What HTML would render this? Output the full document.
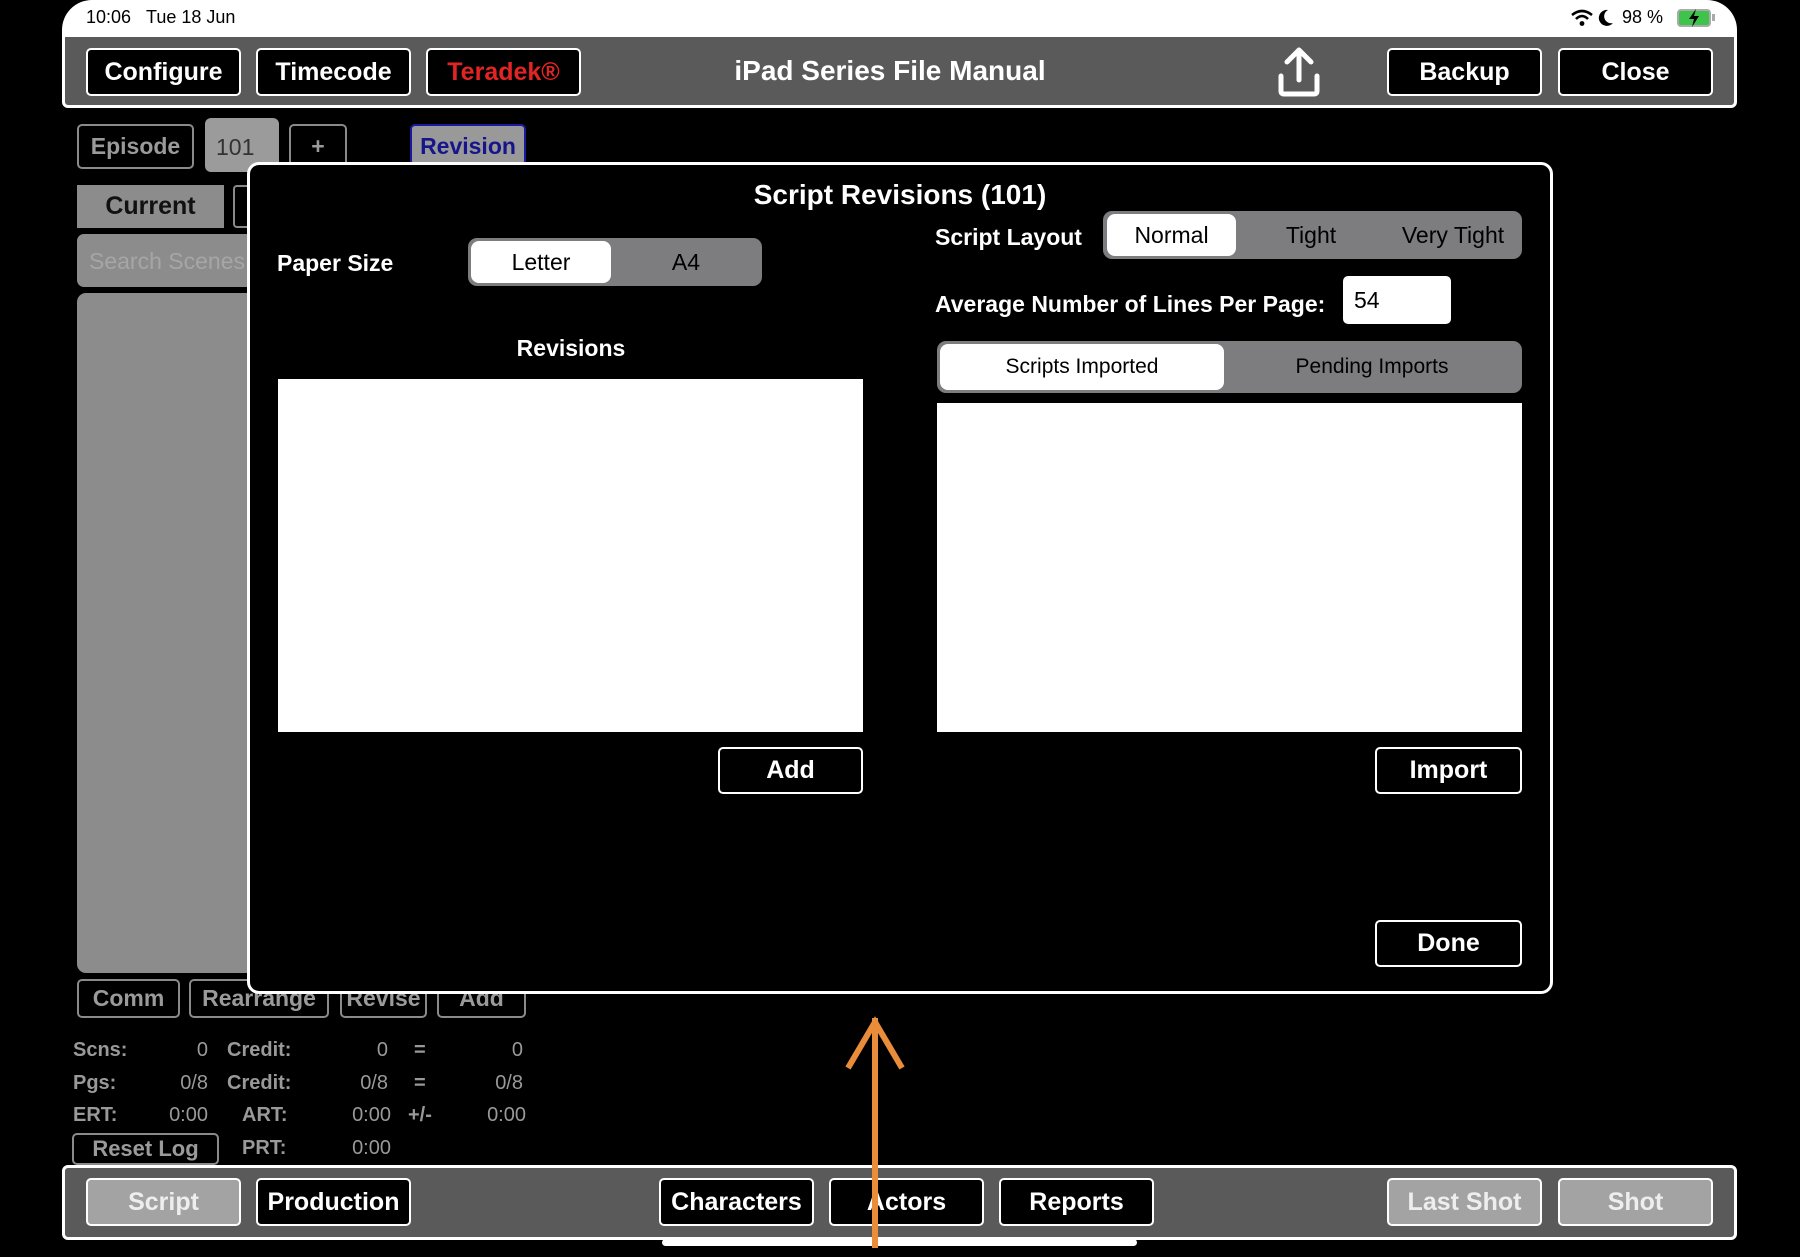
<!DOCTYPE html>
<html><head><meta charset="utf-8"><style>
*{margin:0;padding:0;box-sizing:border-box}
body{width:1800px;height:1257px;background:#000;position:relative;overflow:hidden;font-family:"Liberation Sans",Arial,sans-serif}
.a{position:absolute}
.btn{position:absolute;background:#000;border:2.5px solid #fff;border-radius:5px;color:#fff;font-weight:bold;font-size:25px;display:flex;align-items:center;justify-content:center}
.gb{position:absolute;border:2.5px solid #8a8a8a;border-radius:5px;color:#9a9a9a;font-weight:bold;font-size:23px;display:flex;align-items:center;justify-content:center;background:#000}
.gray{background:#a3a3a3;color:#eee}
.st{position:absolute;color:#999;font-size:20px}
.stb{position:absolute;color:#999;font-size:20px;font-weight:bold}
.c{display:flex;align-items:center;justify-content:center}
</style></head><body>
<div class="a" style="left:62px;top:0;width:1675px;height:36px;background:#fff;border-radius:30px 30px 0 0"></div>
<div class="a" style="left:86px;top:7px;font-size:18px;color:#000">10:06&nbsp;&nbsp;&nbsp;Tue 18 Jun</div>
<svg class="a" style="left:1570px;top:9px" width="24" height="18" viewBox="0 0 24 18"><path d="M2 6 Q12 -2 22 6" stroke="#000" stroke-width="2.6" fill="none"/><path d="M6 10 Q12 4 18 10" stroke="#000" stroke-width="2.6" fill="none"/><circle cx="12" cy="14.5" r="2.4" fill="#000"/></svg>
<svg class="a" style="left:1598px;top:9px" width="16" height="18" viewBox="0 0 16 18"><path d="M10 1 A8 8 0 1 0 15 14 A7 7 0 0 1 10 1Z" fill="#000"/></svg>
<div class="a" style="left:1622px;top:7px;font-size:18px;color:#000">98 %</div>
<div class="a" style="left:1677px;top:9px;width:34px;height:18px;border:2px solid #aaa;border-radius:4px;background:#3ec44a"></div>
<div class="a" style="left:1712px;top:14px;width:3px;height:7px;background:#aaa"></div>
<svg class="a" style="left:1684px;top:8px" width="20" height="20" viewBox="0 0 20 20"><path d="M12 1 L5 11 H10 L8 19 L15 8 H10Z" fill="#000"/></svg>
<div class="a" style="left:62px;top:34px;width:1675px;height:74px;background:#5a5a5a;border:3px solid #fff;border-radius:0 0 6px 6px"></div>
<div class="btn" style="left:86px;top:48px;width:155px;height:48px">Configure</div>
<div class="btn" style="left:256px;top:48px;width:155px;height:48px">Timecode</div>
<div class="btn" style="left:426px;top:48px;width:155px;height:48px;color:#e32424">Teradek®</div>
<div class="a" style="left:640px;top:55px;width:500px;text-align:center;color:#fff;font-weight:bold;font-size:28px">iPad Series File Manual</div>
<svg class="a" style="left:1275px;top:44px" width="48" height="54" viewBox="0 0 48 54"><path d="M24 36 V6 M12 18 L24 6 L36 18" stroke="#fff" stroke-width="5" fill="none" stroke-linecap="round" stroke-linejoin="round"/><path d="M6 32 V47 Q6 50 9 50 H39 Q42 50 42 47 V32" stroke="#fff" stroke-width="5" fill="none" stroke-linecap="round"/></svg>
<div class="btn" style="left:1387px;top:48px;width:155px;height:48px">Backup</div>
<div class="btn" style="left:1558px;top:48px;width:155px;height:48px">Close</div>
<div class="gb" style="left:77px;top:124px;width:117px;height:45px">Episode</div>
<div class="a" style="left:205px;top:118px;width:74px;height:54px;background:#9b9b9b;border-radius:6px;color:#333;font-size:23px;padding:16px 0 0 11px">101</div>
<div class="gb" style="left:289px;top:124px;width:58px;height:45px">+</div>
<div class="a c" style="left:410px;top:124px;width:116px;height:45px;background:#999;border:2.5px solid #1a1aa0;border-radius:5px;color:#16168a;font-weight:bold;font-size:23px">Revision</div>
<div class="a c" style="left:77px;top:185px;width:147px;height:43px;background:#8c8c8c;color:#111;font-weight:bold;font-size:25px">Current</div>
<div class="a" style="left:233px;top:185px;width:40px;height:43px;border:2.5px solid #8a8a8a;border-radius:4px"></div>
<div class="a" style="left:77px;top:234px;width:180px;height:53px;background:#8c8c8c;border-radius:7px;color:#a6a6a6;font-size:23px;padding:14px 0 0 12px;white-space:nowrap;overflow:hidden">Search Scenes</div>
<div class="a" style="left:77px;top:293px;width:180px;height:680px;background:#8c8c8c;border-radius:9px"></div>
<div class="gb" style="left:77px;top:979px;width:103px;height:39px">Comm</div>
<div class="gb" style="left:189px;top:979px;width:140px;height:39px">Rearrange</div>
<div class="gb" style="left:340px;top:979px;width:87px;height:39px">Revise</div>
<div class="gb" style="left:437px;top:979px;width:89px;height:39px">Add</div>
<div class="stb" style="left:73px;top:1039px">Scns:</div><div class="st" style="left:150px;width:58px;text-align:right;top:1039px">0</div>
<div class="stb" style="left:227px;top:1039px">Credit:</div><div class="st" style="left:330px;width:58px;text-align:right;top:1039px">0</div>
<div class="stb" style="left:414px;top:1039px">=</div><div class="st" style="left:465px;width:58px;text-align:right;top:1039px">0</div>
<div class="stb" style="left:73px;top:1072px">Pgs:</div><div class="st" style="left:150px;width:58px;text-align:right;top:1072px">0/8</div>
<div class="stb" style="left:227px;top:1072px">Credit:</div><div class="st" style="left:330px;width:58px;text-align:right;top:1072px">0/8</div>
<div class="stb" style="left:414px;top:1072px">=</div><div class="st" style="left:465px;width:58px;text-align:right;top:1072px">0/8</div>
<div class="stb" style="left:73px;top:1104px">ERT:</div><div class="st" style="left:150px;width:58px;text-align:right;top:1104px">0:00</div>
<div class="stb" style="left:242px;top:1104px">ART:</div><div class="st" style="left:330px;width:61px;text-align:right;top:1104px">0:00</div>
<div class="stb" style="left:408px;top:1104px">+/-</div><div class="st" style="left:465px;width:61px;text-align:right;top:1104px">0:00</div>
<div class="gb" style="left:72px;top:1133px;width:147px;height:32px;font-size:22px">Reset Log</div>
<div class="stb" style="left:242px;top:1137px">PRT:</div><div class="st" style="left:330px;width:61px;text-align:right;top:1137px">0:00</div>
<div class="a" style="left:62px;top:1165px;width:1675px;height:75px;background:#5a5a5a;border:3px solid #fff;border-radius:6px"></div>
<div class="btn gray" style="left:86px;top:1178px;width:155px;height:48px">Script</div>
<div class="btn" style="left:256px;top:1178px;width:155px;height:48px">Production</div>
<div class="btn" style="left:659px;top:1178px;width:155px;height:48px">Characters</div>
<div class="btn" style="left:829px;top:1178px;width:155px;height:48px">Actors</div>
<div class="btn" style="left:999px;top:1178px;width:155px;height:48px">Reports</div>
<div class="btn gray" style="left:1387px;top:1178px;width:155px;height:48px">Last Shot</div>
<div class="btn gray" style="left:1558px;top:1178px;width:155px;height:48px">Shot</div>
<div class="a" style="left:662px;top:1239px;width:475px;height:7px;background:#fff;border-radius:4px"></div>
<div class="a" style="left:247px;top:162px;width:1306px;height:832px;background:#000;border:3px solid #fff;border-radius:12px"></div>
<div class="a" style="left:600px;top:179px;width:600px;text-align:center;color:#fff;font-weight:bold;font-size:28px">Script Revisions (101)</div>
<div class="a" style="left:277px;top:250px;color:#fff;font-weight:bold;font-size:23px">Paper Size</div>
<div class="a" style="left:468px;top:238px;width:294px;height:48px;background:#7d7d80;border-radius:9px"></div>
<div class="a c" style="left:471px;top:241px;width:140px;height:42px;background:#fff;border-radius:8px;font-size:23px;color:#000">Letter</div>
<div class="a c" style="left:611px;top:241px;width:150px;height:42px;font-size:23px;color:#000">A4</div>
<div class="a" style="left:935px;top:224px;color:#fff;font-weight:bold;font-size:23px">Script Layout</div>
<div class="a" style="left:1103px;top:211px;width:419px;height:48px;background:#7d7d80;border-radius:9px"></div>
<div class="a c" style="left:1107px;top:214px;width:129px;height:42px;background:#fff;border-radius:8px;font-size:23px;color:#000">Normal</div>
<div class="a c" style="left:1246px;top:214px;width:130px;height:42px;font-size:23px;color:#000">Tight</div>
<div class="a c" style="left:1386px;top:214px;width:134px;height:42px;font-size:23px;color:#000">Very Tight</div>
<div class="a" style="left:935px;top:291px;color:#fff;font-weight:bold;font-size:23px">Average Number of Lines Per Page:</div>
<div class="a" style="left:1343px;top:276px;width:108px;height:48px;background:#fff;border-radius:5px;font-size:23px;color:#000;padding:11px 0 0 11px">54</div>
<div class="a" style="left:420px;top:335px;width:302px;text-align:center;color:#fff;font-weight:bold;font-size:23px">Revisions</div>
<div class="a" style="left:278px;top:379px;width:585px;height:353px;background:#fff"></div>
<div class="a" style="left:937px;top:341px;width:585px;height:52px;background:#7d7d80;border-radius:9px"></div>
<div class="a c" style="left:940px;top:344px;width:284px;height:46px;background:#fff;border-radius:8px;font-size:21px;color:#000">Scripts Imported</div>
<div class="a c" style="left:1224px;top:344px;width:296px;height:46px;font-size:21px;color:#000">Pending Imports</div>
<div class="a" style="left:937px;top:403px;width:585px;height:329px;background:#fff"></div>
<div class="btn" style="left:718px;top:747px;width:145px;height:47px">Add</div>
<div class="btn" style="left:1375px;top:747px;width:147px;height:47px">Import</div>
<div class="btn" style="left:1375px;top:920px;width:147px;height:47px">Done</div>
<svg class="a" style="left:840px;top:1010px" width="70" height="245" viewBox="0 0 70 245"><path d="M35 8 V238 M8 58 L35 12 L62 58" stroke="#ea8d3a" stroke-width="6" fill="none"/></svg>
</body></html>
